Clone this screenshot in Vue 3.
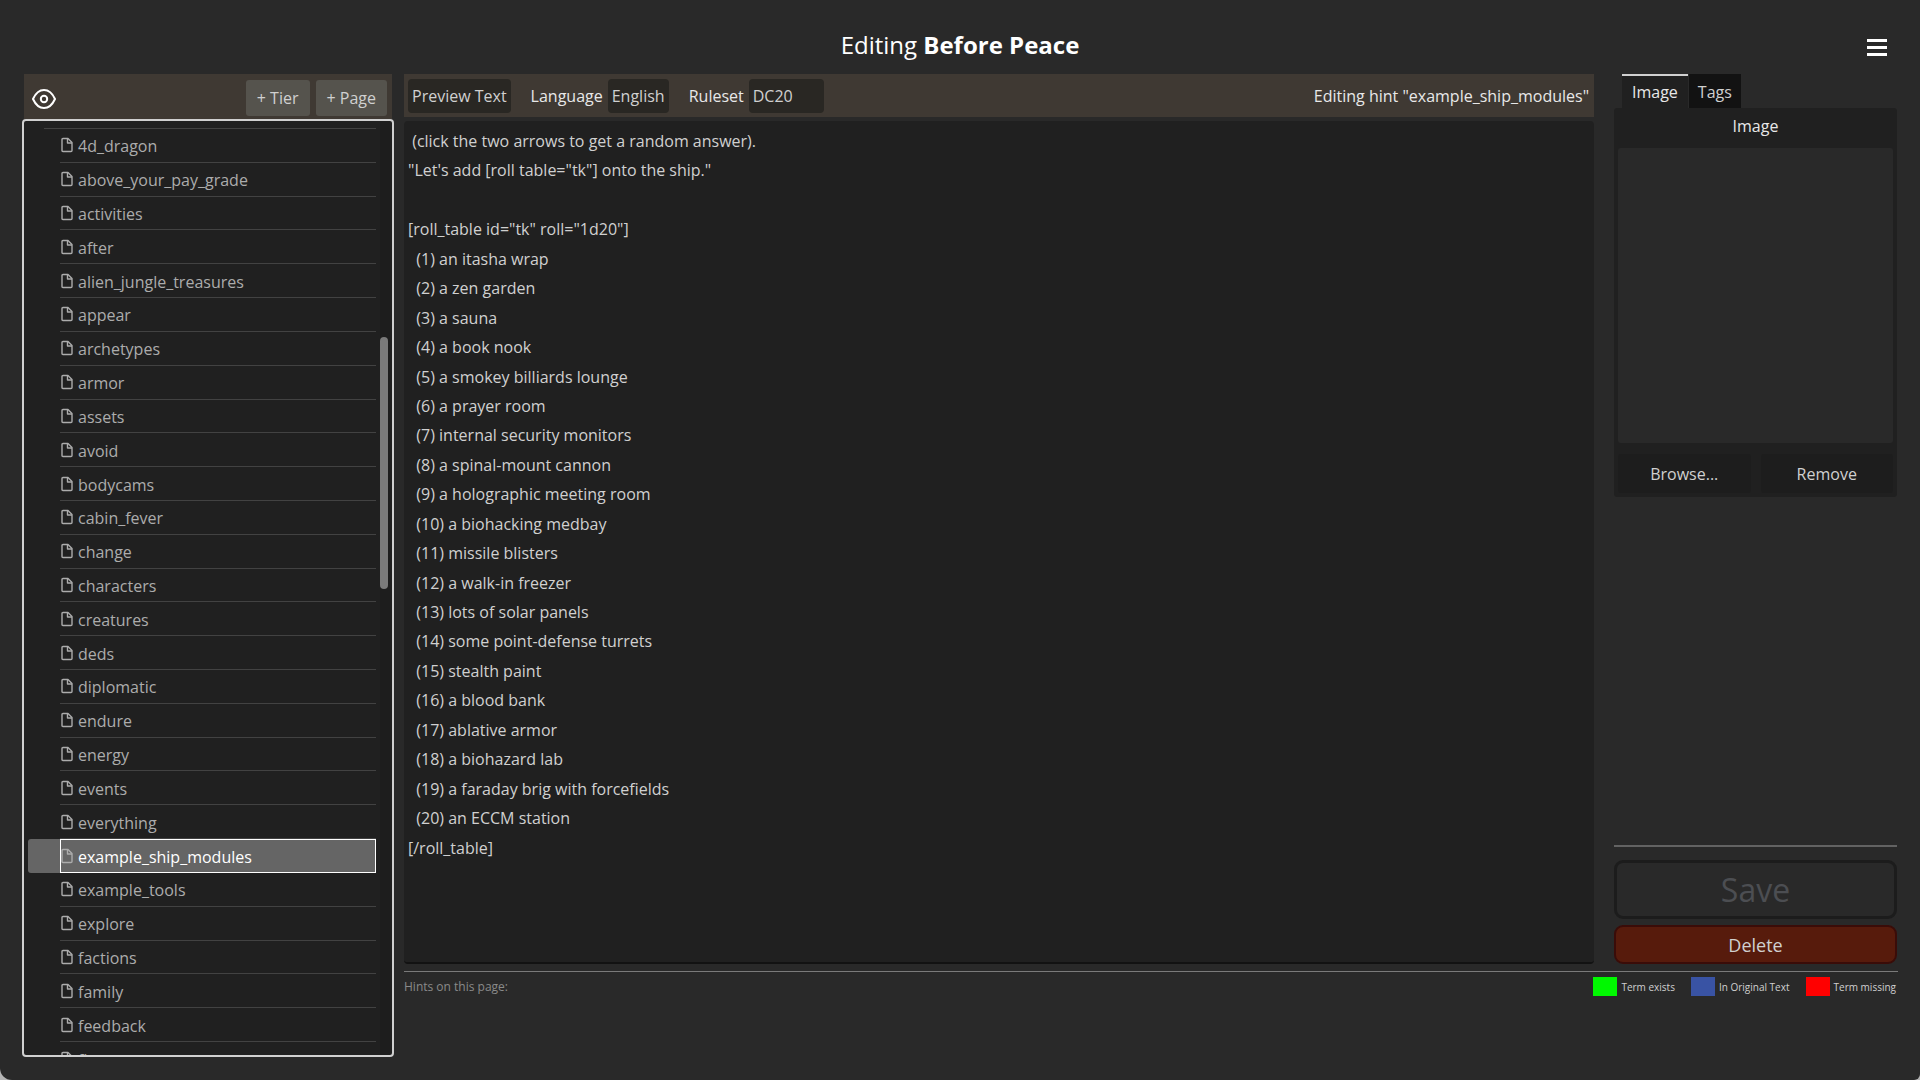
<script setup>
import { ref } from 'vue'

const hints = [
  '4d_dragon', 'above_your_pay_grade', 'activities', 'after', 'alien_jungle_treasures',
  'appear', 'archetypes', 'armor', 'assets', 'avoid', 'bodycams', 'cabin_fever', 'change',
  'characters', 'creatures', 'deds', 'diplomatic', 'endure', 'energy', 'events',
  'everything', 'example_ship_modules', 'example_tools', 'explore', 'factions', 'family',
  'feedback', 'first',
]
const selected = ref('example_ship_modules')

const modules = [
  'an itasha wrap', 'a zen garden', 'a sauna', 'a book nook', 'a smokey billiards lounge',
  'a prayer room', 'internal security monitors', 'a spinal-mount cannon',
  'a holographic meeting room', 'a biohacking medbay', 'missile blisters',
  'a walk-in freezer', 'lots of solar panels', 'some point-defense turrets',
  'stealth paint', 'a blood bank', 'ablative armor', 'a biohazard lab',
  'a faraday brig with forcefields', 'an ECCM station',
]
const text = ref([
  ' (click the two arrows to get a random answer).',
  '"Let\'s add [roll table="tk"] onto the ship."',
  '',
  '[roll_table id="tk" roll="1d20"]',
  ...modules.map((m, i) => `  (${i + 1}) ${m}`),
  '[/roll_table]',
].join('\n'))

const legend = [
  { label: 'Term exists', tone: 'exists' },
  { label: 'In Original Text', tone: 'original' },
  { label: 'Term missing', tone: 'missing' },
]
</script>

<template>
  <div class="window">
    <header class="titlebar">
      <h1>Editing <b>Before Peace</b></h1>
      <button class="menu" type="button" aria-label="Menu"><i></i><i></i><i></i></button>
    </header>

    <div class="body">
      <nav class="sidebar">
        <div class="bar side-bar">
          <button class="eye" type="button" aria-label="Toggle visibility">
            <svg width="24" height="20" viewBox="0 0 24 20" fill="none" stroke="#fff" stroke-width="2">
              <path d="M1 10C3.500 4.500 7.300 1 12 1s8.500 3.500 11 9c-2.500 5.500-6.300 9-11 9S3.500 15.500 1 10z" />
              <circle cx="12" cy="10" r="3.200" />
            </svg>
          </button>
          <button class="add" type="button">+ Tier</button>
          <button class="add" type="button">+ Page</button>
        </div>
        <div class="tree">
          <ul>
            <li v-for="h in hints" :key="h" :class="{ selected: h === selected }">
              <button type="button" @click="selected = h">
                <svg width="12" height="16" viewBox="0 0 12 16" fill="none" stroke="currentColor" stroke-width="1.400" stroke-linejoin="round">
                  <path d="M2 1.500h5L11 5.500v8q0 1-1 1H2q-1 0-1-1v-11q0-1 1-1z" />
                  <path d="M6.500 1.500v4.500H11" />
                </svg>
                <span>{{ h }}</span>
              </button>
            </li>
          </ul>
          <div class="track"><div class="thumb"></div></div>
        </div>
      </nav>

      <div class="workspace">
        <div class="panes">
          <main class="editor">
            <div class="bar tools">
              <button class="chip" type="button">Preview Text</button>
              <label for="language">Language</label>
              <select id="language" class="chip"><option>English</option></select>
              <label for="ruleset">Ruleset</label>
              <select id="ruleset" class="chip ruleset"><option>DC20</option></select>
              <span class="status">Editing hint "{{ selected }}"</span>
            </div>
            <textarea v-model="text" aria-label="Hint text" spellcheck="false"></textarea>
          </main>

          <aside class="inspector">
            <div class="tabs" role="tablist">
              <button class="tab active" type="button" role="tab" aria-selected="true">Image</button>
              <button class="tab" type="button" role="tab" aria-selected="false">Tags</button>
            </div>
            <section class="panel">
              <h2>Image</h2>
              <div class="picture"></div>
              <div class="actions">
                <button type="button">Browse...</button>
                <button type="button">Remove</button>
              </div>
            </section>
            <div class="commit">
              <button class="save" type="button" disabled>Save</button>
              <button class="delete" type="button">Delete</button>
            </div>
          </aside>
        </div>

        <footer class="footer">
          <span class="found">Hints on this page:</span>
          <span v-for="l in legend" :key="l.tone" class="key"><i :class="l.tone"></i>{{ l.label }}</span>
        </footer>
      </div>
    </div>
  </div>
</template>

<style>
body {
  margin: 0;
  background: #b4b4b4;
}
</style>

<style scoped>
* {
  box-sizing: border-box;
}
.window {
  display: flex;
  flex-direction: column;
  height: 100vh;
  padding: 0 22px 23px;
  background: #292929;
  border-radius: 0 0 6px 12px;
  font: 16px/24px "Open Sans", "Noto Sans", sans-serif;
  color: #d0d0d0;
}
button, select, textarea {
  margin: 0;
  padding: 0;
  border: 0;
  font: inherit;
  color: inherit;
  background: none;
}
h1, h2, ul {
  margin: 0;
  padding: 0;
  font-weight: 400;
}
.titlebar {
  display: grid;
  grid-template-columns: 1fr auto 1fr;
  align-items: center;
  flex: none;
  height: 74px;
  padding: 16px 10px 0;
  color: #fff;
}
h1 {
  grid-column: 2;
  font-size: 24px;
  line-height: 32px;
}
.menu {
  justify-self: end;
  display: flex;
  flex-direction: column;
  gap: 4px;
  width: 20px;
  margin: 5px 1px 0 0;
}
.menu i {
  height: 3px;
  background: #fff;
}
.body {
  display: flex;
  flex: 1;
  gap: 10px;
  min-height: 0;
}
.sidebar {
  display: flex;
  flex-direction: column;
  flex: none;
  width: 372px;
}
.bar {
  display: flex;
  align-items: center;
  flex: none;
  height: 43px;
  background: #3f3933;
}
.side-bar {
  gap: 6px;
  height: 45px;
  margin: 0 2px;
  padding: 3px 5px 0 8px;
}
.eye {
  height: 24px;
  margin-right: auto;
}
.eye svg {
  display: block;
  margin-top: 2px;
}
.add {
  height: 36px;
  padding: 0 11px;
  background: #55534d;
  border-radius: 3px;
}
.tree {
  position: relative;
  flex: 1;
  min-height: 0;
  padding: 8px 16px 0 4px;
  overflow: hidden;
  background: #202020;
  border: 2px solid #d0d0d0;
  border-radius: 4px;
}
.tree ul {
  display: grid;
  grid-template-rows: repeat(27, minmax(0, 1fr)) 13px;
  height: 100%;
  list-style: none;
}
.tree ul::before {
  content: "";
  position: absolute;
  top: 7px;
  left: 20px;
  right: 16px;
  height: 1px;
  background: #424242;
}
.tree li {
  min-height: 0;
  padding-left: 32px;
}
.tree li button {
  display: flex;
  align-items: center;
  gap: 5px;
  width: 100%;
  height: 100%;
  padding: 2px 1px 0;
  border-bottom: 1px solid #424242;
  color: #acacac;
}
.tree li:last-child button {
  height: 34px;
}
.tree li.selected {
  background: #656565;
  border-radius: 3px;
}
.tree li.selected button {
  padding: 1px 0 0;
  border: 1px solid #fff;
}
.tree svg {
  margin-bottom: 2px;
}
.selected span {
  color: #fff;
}
.track {
  position: absolute;
  top: 0;
  right: 2px;
  bottom: 0;
  width: 10px;
  background: #1d1d1d;
}
.thumb {
  width: 8px;
  height: 27%;
  margin-top: 216px;
  background: #7a7a7a;
  border-radius: 4px;
}
.workspace {
  display: flex;
  flex-direction: column;
  flex: 1;
  min-width: 0;
}
.panes {
  display: flex;
  flex: 1;
  gap: 20px;
  min-height: 0;
}
.editor {
  display: flex;
  flex-direction: column;
  flex: 1;
  gap: 4px;
  min-width: 0;
  padding-bottom: 7px;
}
.tools {
  padding: 0 5px 0 4px;
  color: #e8e8e8;
}
.chip {
  height: 34px;
  padding: 0 4px;
  appearance: none;
  background: #292723;
  border-radius: 4px;
  color: #d0d0d0;
}
.tools label {
  margin: 0 5px 0 20px;
}
.ruleset {
  width: 75px;
}
.status {
  margin-left: auto;
}
textarea {
  flex: 1;
  padding: 6px 4px;
  resize: none;
  outline: 0;
  background: #202020;
  border-bottom: 2px solid #121212;
  border-radius: 4px;
  line-height: 1.84;
}
.inspector {
  display: flex;
  flex-direction: column;
  flex: none;
  width: 283px;
  margin-right: 1px;
  padding-bottom: 7px;
}
.tabs {
  display: flex;
  gap: 1px;
  padding-left: 8px;
}
.tab {
  height: 34px;
  padding: 2px 9px 0;
  background: #121212;
}
.tab.active {
  padding: 0 10px;
  background: #202020;
  border-top: 2px solid #d0d0d0;
  color: #e8e8e8;
}
.panel {
  padding: 4px;
  background: #202020;
  border-radius: 3px;
}
h2 {
  height: 36px;
  padding-top: 2px;
  font-size: 16px;
  text-align: center;
  color: #e8e8e8;
}
.picture {
  height: 295px;
  background: #292929;
  border-radius: 3px;
}
.actions {
  display: grid;
  grid-template-columns: 1fr 1fr;
  gap: 10px;
  margin-top: 11px;
}
.actions button {
  height: 39px;
  background: #1d1d1d;
  border-radius: 3px;
}
.commit {
  display: flex;
  flex-direction: column;
  gap: 6px;
  margin-top: auto;
  padding-top: 13px;
  border-top: 2px solid #626262;
}
.commit button {
  border-radius: 9px;
}
.save {
  height: 59px;
  border: 3px solid #1c1c1c;
  font-size: 32px;
  color: #4c4e52;
}
.delete {
  height: 39px;
  background: #571b0c;
  border: 2px solid #3a0c08;
  font-size: 18px;
}
.footer {
  display: flex;
  align-items: center;
  gap: 16px;
  flex: none;
  height: 86px;
  padding: 5px 2px 61px 0;
  border-top: 1px solid #7a7a7a;
  font-size: 10px;
  line-height: 16px;
}
.found {
  margin-right: auto;
  font-size: 12px;
  color: #8a8a8a;
}
.key {
  display: flex;
  align-items: center;
  gap: 4px;
}
.key i {
  width: 24px;
  height: 19px;
}
.exists {
  background: #00f800;
}
.original {
  background: #3953a4;
}
.missing {
  background: #f00;
}
</style>
